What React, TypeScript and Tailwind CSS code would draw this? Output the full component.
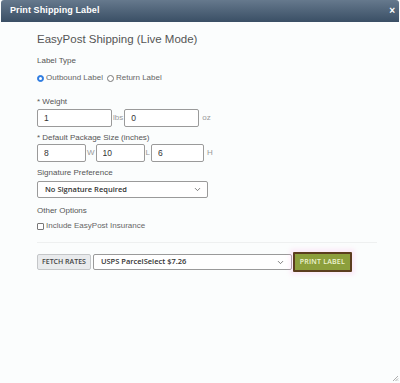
import { ChevronDown } from "lucide-react";

const labelClass = "text-[8px] leading-[10px] text-[#555]";
const inputClass =
  "h-[18px] rounded-[2px] border border-[#9a9a9a] bg-white px-[6px] text-[8.5px] leading-[16px] text-[#333] font-['Liberation_Sans',Arial,sans-serif]";
const unitClass = "px-[1px] text-[8px] text-[#999]";

function Radio({ checked, label }: { checked?: boolean; label: string }) {
  return (
    <label className="flex items-center gap-[2px]">
      <span
        className={`flex h-[7px] w-[7px] items-center justify-center rounded-full border ${
          checked ? "border-[#2f7de1] bg-[#2f7de1]" : "border-[#777] bg-white"
        }`}
      >
        {checked && <span className="h-[3px] w-[3px] rounded-full bg-white" />}
      </span>
      <span>{label}</span>
    </label>
  );
}

export default function App() {
  return (
    <div className="relative h-[383px] w-[400px] overflow-hidden bg-[#fbfdfd] font-['Liberation_Sans',Arial,sans-serif]">
      <div className="mx-[1px] flex h-[22px] items-center justify-between rounded-t-[3px] bg-gradient-to-b from-[#66798d] to-[#3a4f65] pl-[9px] pr-[4px]">
        <span className="text-[9px] font-bold tracking-[0.1px] text-white">
          Print Shipping Label
        </span>
        <span className="text-[10px] font-bold leading-none text-white">×</span>
      </div>

      <div className="pl-[37px] pr-[24px]">
        <h2 className="mt-[10px] text-[11.5px] leading-[14px] text-[#555]">
          EasyPost Shipping (Live Mode)
        </h2>

        <div className={`mt-[10px] ${labelClass}`}>Label Type</div>
        <div className="mt-[6px] flex items-center gap-[4px] text-[8px] text-[#666]">
          <Radio checked label="Outbound Label" />
          <Radio label="Return Label" />
        </div>

        <div className={`mt-[13px] ${labelClass}`}>* Weight</div>
        <div className="mt-[2px] flex items-center">
          <input readOnly value="1" className={`${inputClass} w-[75px]`} />
          <span className={unitClass}>lbs</span>
          <input readOnly value="0" className={`${inputClass} w-[75px]`} />
          <span className={`${unitClass} pl-[3px]`}>oz</span>
        </div>

        <div className={`mt-[6px] ${labelClass}`}>* Default Package Size (inches)</div>
        <div className="mt-[1px] flex items-center">
          <input readOnly value="8" className={`${inputClass} w-[49px]`} />
          <span className={unitClass}>W</span>
          <input readOnly value="10" className={`${inputClass} w-[49px]`} />
          <span className={unitClass}>L</span>
          <input readOnly value="6" className={`${inputClass} w-[53px]`} />
          <span className={`${unitClass} pl-[3px]`}>H</span>
        </div>

        <div className={`mt-[6px] ${labelClass}`}>Signature Preference</div>
        <div className="mt-[3px] flex h-[17px] w-[171px] items-center justify-between rounded-[2px] border border-[#9a9a9a] bg-white pl-[7px] pr-[5px]">
          <span className="font-['Open_Sans',sans-serif] text-[7.5px] font-semibold text-[#333]">
            No Signature Required
          </span>
          <ChevronDown size={9} strokeWidth={2} className="text-[#555]" />
        </div>

        <div className={`mt-[8px] ${labelClass}`}>Other Options</div>
        <label className="mt-[4px] flex items-center gap-[2px] text-[8px] text-[#666]">
          <span className="h-[7px] w-[7px] rounded-[1px] border border-[#777] bg-white" />
          Include EasyPost Insurance
        </label>

        <div className="mt-[10px] h-px w-[340px] bg-[#eef0f0]" />

        <div className="mt-[9px] flex items-center">
          <button className="h-[16px] rounded-[2px] border border-[#c4c6c8] bg-[#e9ebed] px-[4px] font-['Open_Sans',sans-serif] text-[7px] font-semibold text-[#444]">
            FETCH RATES
          </button>
          <div className="ml-[2px] flex h-[16px] w-[199px] items-center justify-between rounded-[2px] border border-[#9a9a9a] bg-white pl-[7px] pr-[6px]">
            <span className="font-['Open_Sans',sans-serif] text-[7.5px] font-semibold text-[#333]">
              USPS ParcelSelect $7.26
            </span>
            <ChevronDown size={9} strokeWidth={2} className="text-[#555]" />
          </div>
          <button className="ml-[1px] h-[20px] w-[59px] rounded-[1px] border-[2px] border-[#5b3d1e] bg-[#8c9f3c] font-['Open_Sans',sans-serif] text-[7px] font-semibold tracking-[0.2px] text-[#eef4d2] shadow-[0_0_4px_3px_rgba(255,180,230,0.25)]">
            PRINT LABEL
          </button>
        </div>
      </div>

      <svg
        className="absolute bottom-[1px] right-[1px]"
        width="7"
        height="7"
        viewBox="0 0 7 7"
      >
        <path d="M6 1 L1 6 M6 3.5 L3.5 6 M6 5.5 L5.5 6" stroke="#999" strokeWidth="0.8" />
      </svg>
    </div>
  );
}
